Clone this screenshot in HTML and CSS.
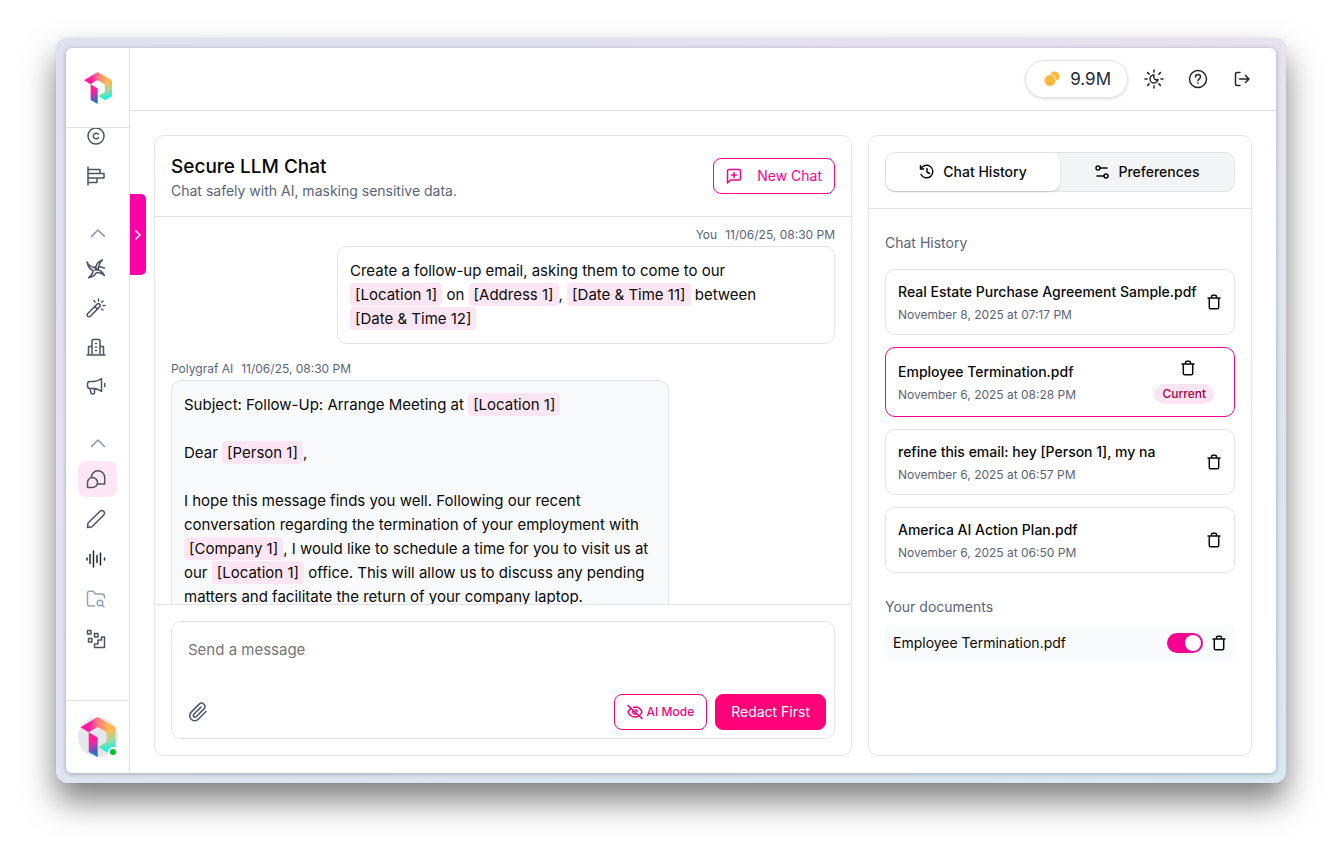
FILE: index.html
```html
<!DOCTYPE html>
<html lang="en">
<head>
    <meta charset="UTF-8">
    <meta name="viewport" content="width=device-width, initial-scale=1.0">
    <title>Secure LLM Chat</title>
    <link rel="stylesheet" href="styles.css">
</head>
<body>
    <!-- shared icons -->
    <svg class="sprite" aria-hidden="true">
        <defs>
            <linearGradient id="logoTop" x1="0" y1="0" x2="1" y2="0">
                <stop offset="0.25" stop-color="#ff1aa0"/>
                <stop offset="0.5" stop-color="#ff7a86"/>
                <stop offset="0.8" stop-color="#ffb84d"/>
            </linearGradient>
            <linearGradient id="logoRight" x1="0.4" y1="0" x2="0.6" y2="1">
                <stop offset="0.15" stop-color="#ffb84d"/>
                <stop offset="0.55" stop-color="#a5d8a0"/>
                <stop offset="0.9" stop-color="#12f5dc"/>
            </linearGradient>
            <linearGradient id="logoLeg" x1="0" y1="0" x2="0.2" y2="1">
                <stop offset="0.45" stop-color="#ff1f9c"/>
                <stop offset="1" stop-color="#1579c8"/>
            </linearGradient>
        </defs>
        <symbol id="logo" viewBox="0 0 106 121">
            <path fill="url(#logoTop)" d="M0 31 52 0l54 31-27 15-27-16-27 16z"/>
            <path fill="url(#logoRight)" d="M79 46l27-15v61l-26 15-27-16 26-15z"/>
            <path fill="url(#logoLeg)" d="M25 46l27 16v59l-27-15z"/>
        </symbol>
        <symbol id="trash" viewBox="0 0 16 16">
            <path d="M2 4h12M3.300 4v9.400c0 .9.500 1.400 1.400 1.400h6.600c.9 0 1.400-.5 1.400-1.400V4M5.500 4V2.600c0-.9.500-1.300 1.300-1.300h2.400c.8 0 1.300.4 1.300 1.300V4"/>
        </symbol>
        <symbol id="chevron" viewBox="0 0 16 16">
            <path d="M1.500 11.500 8 5l6.500 6.500"/>
        </symbol>
    </svg>

    <div class="window">
        <div class="app">
            <aside class="sidebar">
                <a href="#" class="brand" aria-label="Home"><svg class="brand-logo"><use href="#logo"/></svg></a>
                <nav class="nav">
                    <div class="nav-group">
                        <a href="#" class="nav-item" aria-label="Copyright">
                            <svg class="icon" viewBox="0 0 20 20"><circle cx="10" cy="10" r="8"/><path d="M12.300 8.300a2.800 2.800 0 1 0 0 3.400"/></svg>
                        </a>
                        <a href="#" class="nav-item" aria-label="Reports">
                            <svg class="icon" viewBox="0 0 20 20"><path d="M2 1v18M2 3.500h12v4H2M2 7.500h16v4.500H2M14 12H2M2 16.500h9V12"/></svg>
                        </a>
                    </div>
                    <div class="nav-group">
                        <button class="nav-toggle" aria-label="Collapse group"><svg class="icon-sm"><use href="#chevron"/></svg></button>
                        <div class="nav-list">
                            <a href="#" class="nav-item" aria-label="Humanizer">
                                <svg class="icon" viewBox="0 0 20 20"><path d="M1 3c1.500 3 3.500 4.800 6.500 5.500L10 7.500c.8-3.200 3-5.300 6.500-6.500-2.300 2-3.500 4-3.700 6.500L12 11c2.500.3 4.800 2.500 6.500 5.500-2.500-2.200-5-3.200-8-2.800C8.500 16.800 6 18.300 2.500 18.800c2.500-1.600 4.200-4 4.800-7C4 10.500 2 7.500 1 3zM12.800 7.500l5.700 1.500M9.200 9.300h1.600v1.800H9.200z"/></svg>
                            </a>
                            <a href="#" class="nav-item" aria-label="Rewrite">
                                <svg class="icon" viewBox="0 0 20 20"><path d="M1.800 15.500 11 6.300a1.800 1.800 0 0 1 2.600 2.600L4.400 18.200a1.800 1.800 0 0 1-2.600-2.700zM8.800 8.500l2.600 2.600M8 2.500l1 1.500M12.500 1v2M17 3l-1.300 1.300M19 7.500h-2M17 12l-1.500-1"/></svg>
                            </a>
                            <a href="#" class="nav-item" aria-label="Organization">
                                <svg class="icon" viewBox="0 0 20 20"><path d="M1 18h18M2.500 18v-8.500h3.500M17.500 18V9.500H14M6 18V4c0-1 .5-1.500 1.500-1.500h5c1 0 1.500.5 1.500 1.500v14M9.500 6.500h1M9.500 10h1M9.500 13.500h1"/></svg>
                            </a>
                            <a href="#" class="nav-item" aria-label="Announcements">
                                <svg class="icon" viewBox="0 0 20 20"><path d="M4 5.500h4c3 0 5-1 7.500-3v13c-2.500-1.700-4.500-3-7.500-3H4c-1.500 0-2.500-1-2.500-2.500V8c0-1.500 1-2.500 2.500-2.500zM4 12.500l1 4.500c.3 1.400 3.500 1.400 3.500 0v-4.500M18.700 7.500v3"/></svg>
                            </a>
                        </div>
                    </div>
                    <div class="nav-group">
                        <button class="nav-toggle" aria-label="Collapse group"><svg class="icon-sm"><use href="#chevron"/></svg></button>
                        <a href="#" class="nav-item active" aria-label="Secure chat">
                            <svg class="icon" viewBox="0 0 20 20"><path d="M5.300 8.500A6.700 6.700 0 1 1 18.700 8.500V15H11.500M1.500 18.500v-5a5 5 0 1 1 5 5z"/></svg>
                        </a>
                        <a href="#" class="nav-item" aria-label="Editor">
                            <svg class="icon" viewBox="0 0 20 20"><path d="M1.500 18.500l.5-4.500L14 2.300a2.500 2.500 0 0 1 3.700 3.600L6 17.700z"/></svg>
                        </a>
                        <a href="#" class="nav-item dark" aria-label="Audio">
                            <svg class="icon" viewBox="0 0 20 20"><path d="M1 9v2M4 5.500v9M7.500 2v16M11 6.500v7M14.500 4v12M18.500 9v2"/></svg>
                        </a>
                        <a href="#" class="nav-item pale" aria-label="File search">
                            <svg class="icon" viewBox="0 0 20 20"><path d="M8.500 17H3.500C2 17 1.500 16 1.500 15V4c0-1 .5-1.700 1.700-1.700h4L9.500 5H16c1.600 0 2.500.8 2.500 2.300V9"/><circle cx="14" cy="14" r="2.800"/><path d="M16 16l2 2"/></svg>
                        </a>
                        <a href="#" class="nav-item" aria-label="Workflows">
                            <svg class="icon" viewBox="0 0 20 20"><path d="M1.500 1.500h3.500V5H1.500zM8.500 4.500H12V8H8.500zM2.500 9.500H6V13H2.500zM8.500 18.500v-3.500H12v-4h3.500V8h3v10.500z"/></svg>
                        </a>
                    </div>
                </nav>
                <button class="account" aria-label="Account">
                    <span class="avatar"><svg class="avatar-logo"><use href="#logo"/></svg><span class="status"></span></span>
                </button>
                <button class="expand" aria-label="Expand sidebar"><svg class="expand-icon" viewBox="0 0 10 10"><path d="M3 1l4 4-4 4"/></svg></button>
            </aside>

            <div class="content">
                <header class="topbar">
                    <button class="credits">
                        <svg class="coins" viewBox="0 0 16 16"><circle cx="10.500" cy="5.500" r="5"/><circle class="coin-front" cx="6" cy="9.500" r="6"/></svg>
                        9.9M
                    </button>
                    <button class="tool" aria-label="Theme">
                        <svg class="icon" viewBox="0 0 20 20"><path d="M10 1v2M10 17v2M1 10h2M17 10h2M3.600 3.600l1.500 1.500M14.900 14.900l1.500 1.500M3.600 16.400l1.500-1.500M14.900 5.100l1.500-1.500M10 6a4 4 0 1 0 4 4.400c-2.500 1.600-5.200-1.200-4-4.400z"/></svg>
                    </button>
                    <button class="tool" aria-label="Help">
                        <svg class="icon" viewBox="0 0 20 20"><circle cx="10" cy="10" r="8.500"/><path d="M7.500 8c0-3.200 5-3.200 5 0 0 1.800-2.500 1.900-2.500 3.700M10 14v.3"/></svg>
                    </button>
                    <button class="tool" aria-label="Log out">
                        <svg class="icon" viewBox="0 0 20 20"><path d="M8 3.500H5C4 3.500 3.500 4 3.500 5v10c0 1 .5 1.500 1.500 1.500h3M7.500 10H17M13.500 6.500 17 10l-3.500 3.500"/></svg>
                    </button>
                </header>

                <main class="main">
                    <section class="panel chat">
                        <div class="chat-header">
                            <div>
                                <h1>Secure LLM Chat</h1>
                                <p class="subtitle">Chat safely with AI, masking sensitive data.</p>
                            </div>
                            <button class="btn new-chat">
                                <svg class="icon-sm" viewBox="0 0 16 16"><path d="M1.500 15V3c0-1 .5-1.500 1.500-1.500h10c1 0 1.500.5 1.500 1.500v7.500c0 1-.5 1.500-1.500 1.500H4.500zM8 4.500v5M5.500 7h5"/></svg>
                                New Chat
                            </button>
                        </div>

                        <div class="messages">
                            <div class="message mine">
                                <div class="meta"><span>You</span><span>11/06/25, 08:30 PM</span></div>
                                <div class="bubble">Create a follow-up email, asking them to come to our<br><mark>[Location 1]</mark> on <mark>[Address 1]</mark>, <mark>[Date &amp; Time 11]</mark> between<br><mark>[Date &amp; Time 12]</mark></div>
                            </div>
                            <div class="message">
                                <div class="meta"><span>Polygraf AI</span><span>11/06/25, 08:30 PM</span></div>
                                <div class="bubble">
                                    <p>Subject: Follow-Up: Arrange Meeting at <mark>[Location 1]</mark></p>
                                    <p>Dear <mark>[Person 1]</mark>,</p>
                                    <p>I hope this message finds you well. Following our recent conversation regarding the termination of your employment with <mark>[Company 1]</mark>, I would like to schedule a time for you to visit us at our <mark>[Location 1]</mark> office. This will allow us to discuss any pending matters and facilitate the return of your company laptop.</p>
                                </div>
                            </div>
                        </div>

                        <form class="composer">
                            <div class="composer-box">
                                <textarea placeholder="Send a message" aria-label="Send a message"></textarea>
                                <div class="composer-actions">
                                    <button type="button" class="attach" aria-label="Attach file">
                                        <svg class="icon" viewBox="0 0 20 20"><path d="M18 9.500l-7.700 7.700a5 5 0 0 1-7.100-7.100l8-8a3.400 3.400 0 0 1 4.800 4.800l-7.800 7.800a1.700 1.700 0 0 1-2.400-2.400L13 5.100"/></svg>
                                    </button>
                                    <button type="button" class="btn ai-mode">
                                        <svg class="icon-sm" viewBox="0 0 16 16"><path d="M1 1.500l14 13M4.500 4.300C2.800 5.200 1.600 6.600 1 8c1.200 2.700 3.800 5 7 5 1.400 0 2.600-.4 3.700-1M6.500 3.200c4-.7 7.200 1.600 8.500 4.800-.4 1-1 1.900-1.900 2.700M6.300 6.500a2.200 2.200 0 0 0 3.200 3M8.500 5.800a2.200 2.200 0 0 1 1.700 1.700"/></svg>
                                        AI Mode
                                    </button>
                                    <button type="submit" class="btn primary">Redact First</button>
                                </div>
                            </div>
                        </form>
                    </section>

                    <section class="panel side">
                        <div class="side-header">
                            <div class="tabs" role="tablist">
                                <button class="tab active" role="tab" aria-selected="true">
                                    <svg class="icon-sm" viewBox="0 0 16 16"><path d="M1.500 1.800V5h3.200M1.800 5A6.300 6.300 0 1 1 2 10.500M8 4.500V8l2.500 1.500"/></svg>
                                    Chat History
                                </button>
                                <button class="tab" role="tab" aria-selected="false">
                                    <svg class="icon-sm" viewBox="0 0 16 16"><circle cx="4" cy="4" r="2"/><path d="M6 4h7M3 12h7"/><circle cx="12" cy="12" r="2"/></svg>
                                    Preferences
                                </button>
                            </div>
                        </div>
                        <div class="side-body">
                            <h2>Chat History</h2>
                            <ul class="history">
                                <li class="history-item">
                                    <div class="history-text">
                                        <a href="#">Real Estate Purchase Agreement Sample.pdf</a>
                                        <time>November 8, 2025 at 07:17 PM</time>
                                    </div>
                                    <button class="delete" aria-label="Delete chat"><svg class="icon-sm"><use href="#trash"/></svg></button>
                                </li>
                                <li class="history-item current">
                                    <div class="history-text">
                                        <a href="#">Employee Termination.pdf</a>
                                        <time>November 6, 2025 at 08:28 PM</time>
                                    </div>
                                    <div class="current-side">
                                        <button class="delete" aria-label="Delete chat"><svg class="icon-sm"><use href="#trash"/></svg></button>
                                        <span class="badge">Current</span>
                                    </div>
                                </li>
                                <li class="history-item">
                                    <div class="history-text">
                                        <a href="#">refine this email: hey [Person 1], my na</a>
                                        <time>November 6, 2025 at 06:57 PM</time>
                                    </div>
                                    <button class="delete" aria-label="Delete chat"><svg class="icon-sm"><use href="#trash"/></svg></button>
                                </li>
                                <li class="history-item">
                                    <div class="history-text">
                                        <a href="#">America AI Action Plan.pdf</a>
                                        <time>November 6, 2025 at 06:50 PM</time>
                                    </div>
                                    <button class="delete" aria-label="Delete chat"><svg class="icon-sm"><use href="#trash"/></svg></button>
                                </li>
                            </ul>
                            <h2>Your documents</h2>
                            <div class="document">
                                <label for="doc1">Employee Termination.pdf</label>
                                <input type="checkbox" class="switch" id="doc1" checked>
                                <button class="delete" aria-label="Delete document"><svg class="icon-sm"><use href="#trash"/></svg></button>
                            </div>
                        </div>
                    </section>
                </main>
            </div>
        </div>
    </div>
</body>
</html>
```
FILE: styles.css
```css
* {
    box-sizing: border-box;
}
body {
    margin: 0;
    height: 100vh;
    padding: 38px 56px 74px;
    background: #fff;
    font-family: Inter, "Liberation Sans", sans-serif;
    font-size: 14px;
    line-height: 20px;
    color: #0a0a0a;
    overflow: hidden;
}
h1, h2, p, ul {
    margin: 0;
    padding: 0;
}
button, textarea {
    font: inherit;
    color: inherit;
}
button {
    padding: 0;
    border: none;
    background: none;
    cursor: pointer;
}
a {
    color: inherit;
    text-decoration: none;
}
svg {
    display: block;
    flex-shrink: 0;
    fill: none;
    stroke: currentColor;
    stroke-width: 1.5;
    stroke-linecap: round;
    stroke-linejoin: round;
}
.sprite {
    position: absolute;
    width: 0;
    height: 0;
}
.icon {
    width: 20px;
    height: 20px;
}
.icon-sm {
    width: 16px;
    height: 16px;
}

/* window frame */
.window {
    height: 100%;
    padding: 10px;
    border-radius: 12px;
    background: linear-gradient(160deg, #dfe1f0 0%, #e8e2f0 35%, #dde5ef 70%, #d9e9f2 100%);
    box-shadow: 0 0 1px rgba(0, 0, 0, 0.3), 0 18px 32px rgba(0, 0, 0, 0.5);
}
.app {
    display: flex;
    height: 100%;
    border-radius: 6px;
    background: #fff;
    box-shadow: 0 1px 5px rgba(40, 50, 80, 0.35);
}

/* sidebar */
.sidebar {
    position: relative;
    display: flex;
    flex-direction: column;
    width: 64px;
    flex-shrink: 0;
    border-right: 1px solid #e2e2e6;
    color: #4b5563;
}
.brand {
    display: flex;
    align-items: center;
    justify-content: center;
    height: 80px;
    flex-shrink: 0;
    border-bottom: 1px solid #e2e2e6;
}
.brand-logo {
    width: 28px;
    height: 32px;
    stroke: none;
}
.nav {
    display: flex;
    flex: 1;
    flex-direction: column;
    gap: 27px;
    min-height: 0;
    overflow: hidden;
}
.nav-group {
    display: flex;
    flex-direction: column;
    align-items: center;
    gap: 4px;
}
.nav-group:first-child {
    margin-top: -10px;
}
.nav-list {
    display: flex;
    flex-direction: column;
    gap: 3px;
}
.nav-item {
    display: flex;
    align-items: center;
    justify-content: center;
    width: 39px;
    height: 36px;
    padding-right: 3px;
    border-radius: 8px;
}
.nav-item.active {
    background: #ffe6f4;
}
.nav-item.dark {
    color: #1e293b;
}
.nav-item.pale {
    color: #94a3b8;
}
.nav-toggle {
    display: flex;
    align-items: center;
    justify-content: center;
    height: 24px;
    margin-bottom: 2px;
    color: #8b95a8;
}
.account {
    display: flex;
    align-items: center;
    justify-content: center;
    height: 73px;
    flex-shrink: 0;
    border-top: 1px solid #e2e2e6;
}
.avatar {
    position: relative;
    width: 40px;
    height: 40px;
    border-radius: 50%;
    background: #e5e7eb;
}
.avatar-logo {
    width: 40px;
    height: 40px;
    stroke: none;
}
.status {
    position: absolute;
    right: 0;
    bottom: 0;
    width: 10px;
    height: 10px;
    border: 2px solid #fff;
    border-radius: 50%;
    background: #00c030;
}
.expand {
    position: absolute;
    top: 146px;
    left: 64px;
    display: flex;
    align-items: center;
    justify-content: center;
    width: 16px;
    height: 81px;
    border-radius: 0 5px 5px 0;
    background: #ff00a8;
    color: #fff;
}
.expand-icon {
    width: 10px;
    height: 10px;
}

/* top bar */
.content {
    display: flex;
    flex: 1;
    flex-direction: column;
    min-width: 0;
}
.topbar {
    display: flex;
    align-items: center;
    justify-content: flex-end;
    gap: 24px;
    height: 63px;
    flex-shrink: 0;
    padding-right: 24px;
    border-bottom: 1px solid #e2e2e6;
    color: #262626;
}
.credits {
    display: flex;
    align-items: center;
    gap: 10px;
    height: 38px;
    margin-right: -8px;
    padding: 0 16px 0 18px;
    border: 1px solid #e2e4ea;
    border-radius: 20px;
    box-shadow: 0 1px 3px rgba(0, 0, 0, 0.15);
    font-size: 17px;
    color: #1e293b;
}
.coins {
    width: 16px;
    height: 16px;
    fill: #ffb83d;
    stroke: none;
}
.coin-front {
    stroke: #fff;
    stroke-width: 1;
}

/* panels */
.main {
    display: flex;
    flex: 1;
    gap: 16px;
    min-height: 0;
    padding: 24px 24px 17px;
}
.panel {
    display: flex;
    flex-direction: column;
    border: 1px solid #e2e4e8;
    border-radius: 10px;
    overflow: hidden;
}
.chat {
    flex: 1;
    min-width: 0;
}
.chat-header {
    display: flex;
    align-items: center;
    justify-content: space-between;
    height: 81px;
    flex-shrink: 0;
    padding: 0 16px;
    border-bottom: 1px solid #e2e4e8;
}
h1 {
    padding-top: 2px;
    font-size: 19px;
    font-weight: 500;
    line-height: 28px;
}
.subtitle {
    color: #5a6478;
}
.btn {
    display: flex;
    align-items: center;
    justify-content: center;
    height: 36px;
    border: 1px solid #ff0090;
    border-radius: 8px;
    color: #ff0090;
}
.new-chat {
    gap: 15px;
    padding: 0 12px;
}
.messages {
    display: flex;
    flex: 1;
    flex-direction: column;
    gap: 15px;
    min-height: 0;
    padding: 8px 16px 0;
    overflow: hidden;
}
.message {
    width: 75%;
    flex-shrink: 0;
}
.mine {
    align-self: flex-end;
}
.meta {
    display: flex;
    gap: 8px;
    margin-bottom: 1px;
    font-size: 12px;
    line-height: 20px;
    color: #5a6478;
}
.mine .meta {
    justify-content: flex-end;
}
.bubble {
    padding: 12px;
    border: 1px solid #e2e4e8;
    border-radius: 10px;
    background: #f9fafb;
    font-size: 15px;
    line-height: 24px;
}
.mine .bubble {
    background: #fff;
}
.bubble p + p {
    margin-top: 24px;
}
mark {
    padding: 2px 5px;
    border-radius: 4px;
    background: #fde6f3;
    color: inherit;
}
.composer {
    flex-shrink: 0;
    padding: 16px;
    border-top: 1px solid #e2e4e8;
}
.composer-box {
    padding: 16px 8px 8px 16px;
    border: 1px solid #e2e4e8;
    border-radius: 10px;
}
.composer textarea {
    display: block;
    width: 100%;
    height: 56px;
    padding: 0;
    border: none;
    outline: none;
    resize: none;
    background: none;
    font-size: 15px;
    line-height: 24px;
}
.composer textarea::placeholder {
    color: #757575;
}
.composer-actions {
    display: flex;
    align-items: center;
    gap: 8px;
}
.attach {
    margin-right: auto;
    color: #4b5570;
}
.ai-mode {
    gap: 4px;
    padding: 0 12px;
    border-color: #ff0078;
    font-size: 12px;
    font-weight: 500;
    color: #f00078;
}
.primary {
    padding: 0 15px;
    border-color: #ff0078;
    background: #ff0078;
    color: #fff;
}

/* history panel */
.side {
    width: 384px;
    flex-shrink: 0;
}
.side-header {
    padding: 16px;
    border-bottom: 1px solid #e2e4e8;
}
.tabs {
    display: flex;
    height: 40px;
    border: 1px solid #e2e4e8;
    border-radius: 10px;
    background: #f3f4f6;
}
.tab {
    display: flex;
    flex: 1;
    align-items: center;
    justify-content: center;
    gap: 8px;
    border-radius: 9px;
    font-weight: 500;
}
.tab.active {
    background: #fff;
    box-shadow: 0 1px 2px rgba(0, 0, 0, 0.15);
}
.side-body {
    padding: 24px 16px;
}
h2 {
    font-size: 14px;
    font-weight: 400;
    line-height: 20px;
    color: #5a6478;
}
.history {
    display: flex;
    flex-direction: column;
    gap: 12px;
    margin: 16px 0 24px;
    list-style: none;
}
.history-item {
    display: flex;
    align-items: center;
    justify-content: space-between;
    padding: 12px;
    border: 1px solid #e2e4e8;
    border-radius: 10px;
}
.history-item.current {
    border-color: #f50091;
}
.history-text a {
    display: block;
    font-weight: 500;
}
.history-text time {
    display: block;
    margin-top: 6px;
    font-size: 12px;
    line-height: 14px;
    color: #5a6478;
}
.current-side {
    display: flex;
    flex-direction: column;
    align-items: center;
    gap: 8px;
}
.badge {
    margin-right: 8px;
    padding: 0 8px;
    border-radius: 10px;
    background: #ffe4f2;
    font-size: 12px;
    font-weight: 500;
    color: #a80045;
}
.document {
    display: flex;
    align-items: center;
    gap: 8px;
    height: 36px;
    margin-top: 8px;
    padding: 0 8px;
    border-radius: 8px;
    background: #f9fafb;
}
.document label {
    margin-right: auto;
}
.switch {
    appearance: none;
    width: 36px;
    height: 20px;
    margin: 0;
    padding: 2px;
    border-radius: 10px;
    background: #cbd5e1;
}
.switch::before {
    content: "";
    display: block;
    width: 16px;
    height: 16px;
    border-radius: 50%;
    background: #fff;
}
.switch:checked {
    background: #f50091;
}
.switch:checked::before {
    margin-left: 16px;
}
```
